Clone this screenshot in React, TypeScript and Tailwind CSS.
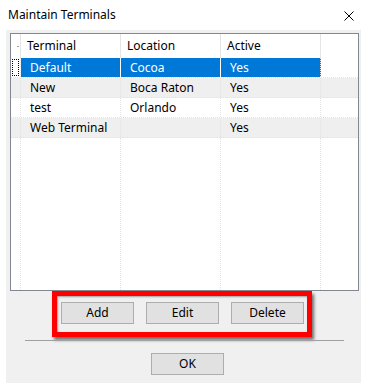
interface Terminal {
  name: string;
  location: string;
  active: string;
}

const terminals: Terminal[] = [
  { name: "Default", location: "Cocoa", active: "Yes" },
  { name: "New", location: "Boca Raton", active: "Yes" },
  { name: "test", location: "Orlando", active: "Yes" },
  { name: "Web Terminal", location: "", active: "Yes" },
];

function DlgButton({ label }: { label: string }) {
  return (
    <button className="w-[73px] h-[22px] bg-[#e1e1e1] border border-[#adadad] text-[12px] text-black leading-none">
      {label}
    </button>
  );
}

export default function App() {
  return (
    <div
      className="w-[365px] h-[388px] bg-white text-black text-[12px] overflow-hidden"
      style={{ fontFamily: "'Noto Sans', 'Liberation Sans', sans-serif" }}
    >
      {/* title bar */}
      <div className="h-[30px] flex items-center justify-between pl-[8px] pr-[11px]">
        <span className="text-[12px]">Maintain Terminals</span>
        <svg width="10" height="10" viewBox="0 0 10 10" className="mt-[1px]">
          <path d="M0.5 0.5 L9.5 9.5 M9.5 0.5 L0.5 9.5" stroke="#000" strokeWidth="1" />
        </svg>
      </div>

      <div className="ml-[6px] w-[355px] h-[353px] bg-[#f0f0f0] flex flex-col">
        {/* list view */}
        <div className="ml-[4px] mt-[3px] w-[349px] h-[258px] bg-white border border-[#828790] flex flex-col">
          <div className="flex h-[24px] items-center">
            <div className="w-[10px] h-full border-r border-[#e5e5e5] relative">
              <span className="absolute right-[1px] top-[12px] w-[2px] h-px bg-[#a0a0a0]" />
            </div>
            <div className="w-[100px] h-full flex items-center pl-[6px] border-r border-[#e5e5e5]">Terminal</div>
            <div className="w-[100px] h-full flex items-center pl-[6px] border-r border-[#e5e5e5]">Location</div>
            <div className="w-[100px] h-full flex items-center pl-[6px] border-r border-[#e5e5e5]">Active</div>
          </div>
          {terminals.map((t, i) => {
            const selected = i === 0;
            const striped = i % 2 === 1;
            return (
              <div
                key={t.name}
                className={`flex h-[20px] border-b border-dotted border-[#e3e3e3] ${striped ? "bg-[#efefef]" : ""}`}
              >
                <div className="w-[10px] h-full border-r border-dotted border-[#e3e3e3] p-px">
                  {selected && <div className="w-full h-full border border-dotted border-black" />}
                </div>
                <div
                  className={`w-[100px] h-full flex items-center pl-[9px] border-r ${
                    selected ? "bg-[#0078d7] text-white border-white border-solid" : "border-dotted border-[#e3e3e3]"
                  }`}
                >
                  {t.name}
                </div>
                <div
                  className={`w-[100px] h-full flex items-center pl-[9px] border-r ${
                    selected ? "bg-[#0078d7] text-white border-white border-solid" : "border-dotted border-[#e3e3e3]"
                  }`}
                >
                  {t.location}
                </div>
                <div
                  className={`w-[100px] h-full flex items-center pl-[9px] border-r border-dotted border-[#e3e3e3] ${
                    selected ? "bg-[#0078d7] text-white" : ""
                  }`}
                >
                  {t.active}
                </div>
              </div>
            );
          })}
          <div className="flex flex-1">
            <div className="w-[10px] border-r border-dotted border-[#e3e3e3]" />
            <div className="w-[100px] border-r border-dotted border-[#e3e3e3]" />
            <div className="w-[100px] border-r border-dotted border-[#e3e3e3]" />
            <div className="w-[100px] border-r border-dotted border-[#e3e3e3]" />
          </div>
        </div>

        {/* highlighted button group */}
        <div className="ml-[46px] w-[260px] h-[46px] border-[5px] border-[#ff0000] shadow-[2px_3px_3px_rgba(0,0,0,0.55),inset_1px_1px_2px_rgba(0,0,0,0.35)] flex items-start gap-[12px] pl-[4px] pt-[6px]">
          <DlgButton label="Add" />
          <DlgButton label="Edit" />
          <DlgButton label="Delete" />
        </div>

        <div className="ml-[19px] mt-[3px] w-[319px] h-px bg-[#a0a0a0]" />

        <div className="ml-[145px] mt-[12px]">
          <DlgButton label="OK" />
        </div>
      </div>
    </div>
  );
}
